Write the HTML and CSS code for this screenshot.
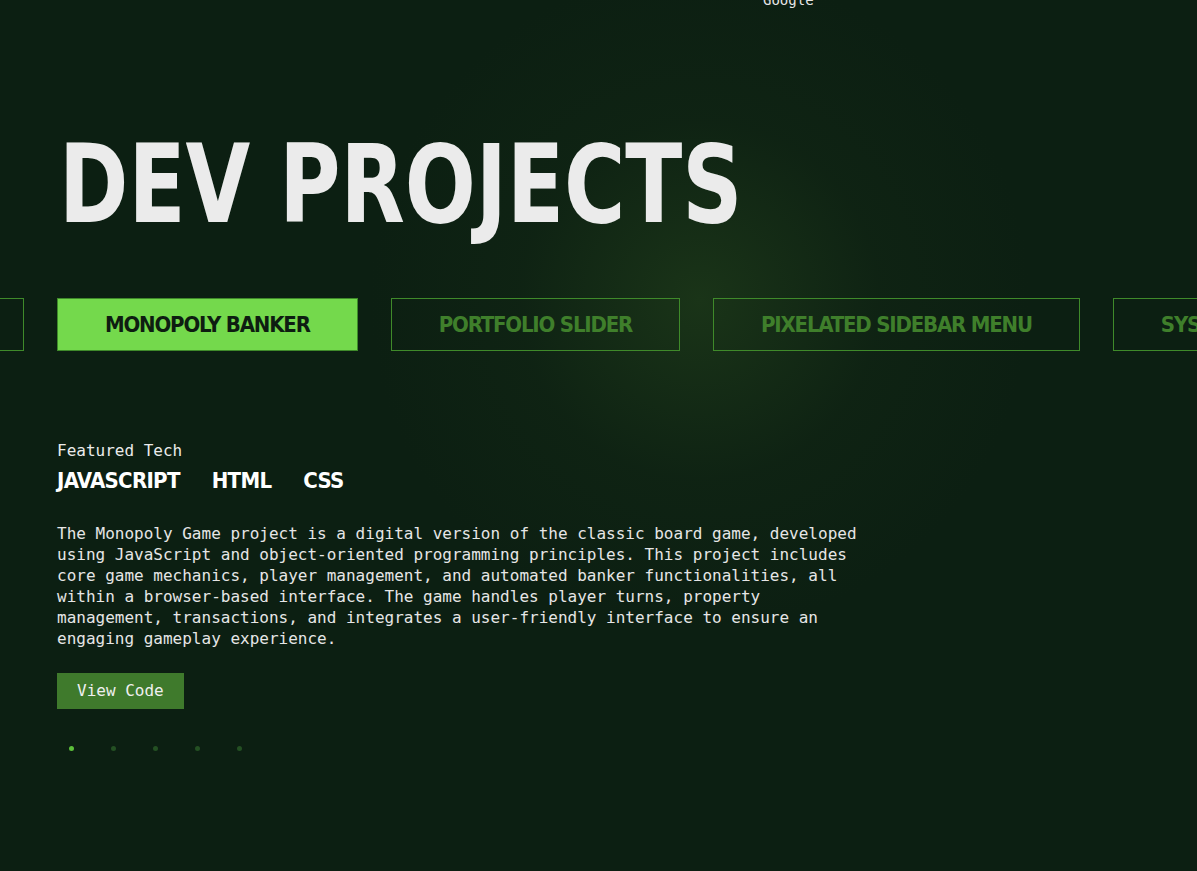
FILE: index.html
```html
<!DOCTYPE html>
<html lang="en">
<head>
<meta charset="utf-8">
<title>Dev Projects</title>
<link rel="stylesheet" href="styles.css">
</head>
<body>
<div class="page">
  <div class="topnote">Google</div>
  <section class="hero">
    <h1 class="title">DEV PROJECTS</h1>
  </section>
  <div class="tabs">
    <div class="track">
      <div class="tab tab-clone">HOTEL BOOKING</div>
      <div class="tab active">MONOPOLY BANKER</div>
      <div class="tab">PORTFOLIO SLIDER</div>
      <div class="tab">PIXELATED SIDEBAR MENU</div>
      <div class="tab">SYSTEM MONITOR</div>
    </div>
  </div>
  <section class="detail">
    <div class="label">Featured Tech</div>
    <div class="techs"><span>JAVASCRIPT</span><span>HTML</span><span>CSS</span></div>
    <p class="desc">The Monopoly Game project is a digital version of the classic board game, developed using JavaScript and object-oriented programming principles. This project includes core game mechanics, player management, and automated banker functionalities, all within a browser-based interface. The game handles player turns, property management, transactions, and integrates a user-friendly interface to ensure an engaging gameplay experience.</p>
    <a class="btn" href="#">View Code</a>
    <div class="dots"><span class="dot on"></span><span class="dot"></span><span class="dot"></span><span class="dot"></span><span class="dot"></span></div>
  </section>
</div>
</body>
</html>
```

FILE: styles.css
```css
html, body {
  margin: 0;
  padding: 0;
  height: 100%;
}
body {
  background: #0c1f12;
  color: #ebebeb;
  font-family: "DejaVu Sans Mono", monospace;
  overflow: hidden;
}
.page {
  position: relative;
  min-height: 871px;
  background: radial-gradient(circle at 700px 300px, #1a3418 0, #13291563 180px, rgba(12,31,18,0) 330px), #0c1f12;
}
.topnote {
  position: absolute;
  left: 763px;
  top: -8px;
  font-size: 14px;
  color: #e6e6e6;
}
.hero {
  padding: 120px 0 0 59px;
}
.title {
  margin: 0;
  font-family: "DejaVu Sans Condensed", "Liberation Sans Narrow", sans-serif;
  font-stretch: condensed;
  font-weight: 700;
  font-size: 108px;
  line-height: 130px;
  color: #ebebeb;
  letter-spacing: 0;
  transform: scaleX(0.86);
  transform-origin: left center;
  white-space: nowrap;
}
.tabs {
  margin-top: 48px;
  overflow: hidden;
}
.track {
  display: flex;
  gap: 33px;
  margin-left: -276px;
}
.tab {
  flex: none;
  height: 53px;
  box-sizing: border-box;
  border: 1px solid #3f8a2a;
  padding: 0 47px;
  display: flex;
  align-items: center;
  justify-content: center;
  font-family: "DejaVu Sans Condensed", "Liberation Sans Narrow", sans-serif;
  font-weight: 700;
  font-size: 22px;
  letter-spacing: -1.2px;
  color: #3f7f2b;
  white-space: nowrap;
}
.tab-clone {
  width: 300px;
}
.tab.active {
  background: #74d94c;
  color: #0e1d11;
}
.detail {
  padding: 90px 0 0 57px;
}
.label {
  font-size: 16px;
  line-height: 20px;
}
.techs {
  display: flex;
  gap: 32px;
  margin-top: 8px;
  font-family: "DejaVu Sans Condensed", "Liberation Sans Narrow", sans-serif;
  font-weight: 700;
  font-size: 22px;
  letter-spacing: -0.7px;
  line-height: 24px;
  color: #ffffff;
}
.desc {
  width: 805px;
  margin: 30px 0 0;
  font-size: 16px;
  line-height: 21px;
  color: #e6e6e6;
}
.btn {
  display: inline-block;
  margin-top: 24px;
  background: #3f7a2c;
  color: #f0f0f0;
  text-decoration: none;
  font-size: 16px;
  line-height: 36px;
  padding: 0 20px;
}
.dots {
  display: flex;
  gap: 37px;
  margin: 37px 0 0 12px;
}
.dot {
  width: 5px;
  height: 5px;
  border-radius: 50%;
  background: #245023;
}
.dot.on {
  background: #5cbf3a;
}
```
